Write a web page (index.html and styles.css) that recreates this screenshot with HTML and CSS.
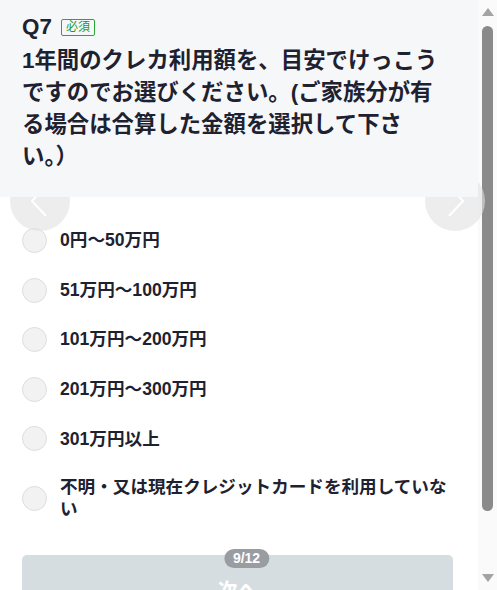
FILE: index.html
```html
<!DOCTYPE html>
<html lang="ja">
<head>
  <meta charset="UTF-8" />
  <title>アンケート Q7</title>
  <link rel="stylesheet" href="styles.css">
</head>
<body>
  <div class="window">
    <div class="page">

      <!-- 設問ヘッダー -->
      <header class="q-head">
        <div class="q-num">Q7 <span class="req">必須</span></div>
        <h1 class="q-text">1年間のクレカ利用額を、目安でけっこうですのでお選びください。(ご家族分が有る場合は合算した金額を選択して下さい。）</h1>
      </header>

      <!-- 選択肢 -->
      <div class="q-body">
        <button class="nav prev" type="button" aria-label="前へ">
          <svg width="16" height="32" viewBox="0 0 16 32"><polyline points="15,1 1,16 15,31" /></svg>
        </button>
        <button class="nav next" type="button" aria-label="次へ">
          <svg width="16" height="32" viewBox="0 0 16 32"><polyline points="1,1 15,16 1,31" /></svg>
        </button>

        <ul class="choices">
          <li class="choice"><span class="radio"></span><span class="label">0円～50万円</span></li>
          <li class="choice"><span class="radio"></span><span class="label">51万円～100万円</span></li>
          <li class="choice"><span class="radio"></span><span class="label">101万円～200万円</span></li>
          <li class="choice"><span class="radio"></span><span class="label">201万円～300万円</span></li>
          <li class="choice"><span class="radio"></span><span class="label">301万円以上</span></li>
          <li class="choice"><span class="radio"></span><span class="label">不明・又は現在クレジットカードを利用していない</span></li>
        </ul>

        <div class="submit-wrap">
          <span class="progress">9/12</span>
          <button class="submit" type="button">次へ</button>
        </div>
      </div>
    </div>

    <!-- スクロールバー -->
    <div class="scrollbar">
      <span class="arrow up"></span>
      <span class="thumb"></span>
      <span class="arrow down"></span>
    </div>
  </div>
</body>
</html>
```

FILE: styles.css
```css
/* リセット用 */
* {
  margin: 0;
  padding: 0;
  box-sizing: border-box;
}

body {
  font-family: "Liberation Sans", "Noto Sans CJK JP", sans-serif;
  background-color: #fff;
  color: #1e2230;
}

.window {
  display: flex;
  height: 590px;
  overflow: hidden;
}

.page {
  width: 478px;
  flex-shrink: 0;
}

/* 設問ヘッダー */
.q-head {
  position: relative;
  z-index: 2;
  background-color: #f6f7f9;
  padding: 12px 38px 24px 22px;
}

.q-num {
  display: flex;
  align-items: center;
  gap: 9px;
  font-size: 22.4px;
  font-weight: bold;
  line-height: 30px;
  margin-bottom: 3px;
}

.req {
  font-size: 12px;
  font-weight: normal;
  line-height: 15px;
  color: #1f9a2a;
  border: 1px solid #2aa836;
  border-radius: 2px;
  padding: 0 4px;
}

.q-text {
  font-size: 22.4px;
  font-weight: bold;
  line-height: 32px;
}

/* 選択肢 */
.q-body {
  position: relative;
  padding: 31px 25px 40px 22px;
}

.nav {
  position: absolute;
  z-index: 1;
  top: -26px;
  width: 60px;
  height: 60px;
  border: none;
  border-radius: 50%;
  background-color: rgba(225, 225, 225, 0.6);
  display: flex;
  align-items: center;
  justify-content: center;
}

.nav svg polyline {
  fill: none;
  stroke: #fff;
  stroke-width: 2;
}

.prev {
  left: 10px;
}

.next {
  left: 425px;
}

.prev svg {
  margin-left: -2px;
}

.next svg {
  margin-left: 2px;
}

.choices {
  list-style: none;
  display: flex;
  flex-direction: column;
  gap: 24.6px;
}

.choice {
  display: flex;
  align-items: center;
  gap: 13px;
  font-size: 17.6px;
  font-weight: bold;
  line-height: 22.5px;
}

.radio {
  width: 25px;
  height: 25px;
  flex-shrink: 0;
  border-radius: 50%;
  background-color: #f2f2f2;
  border: 1px solid #dedede;
}

.submit-wrap {
  position: relative;
  margin-top: 34px;
}

.progress {
  position: absolute;
  top: -6px;
  left: calc(50% + 9px);
  transform: translateX(-50%);
  background-color: #999da2;
  color: #fff;
  font-size: 14px;
  font-weight: bold;
  line-height: 19px;
  padding: 0 9px;
  border-radius: 10px;
}

.submit {
  display: block;
  width: 100%;
  border: none;
  border-radius: 5px;
  background-color: #d6dde1;
  color: #fff;
  font-family: inherit;
  font-size: 20px;
  font-weight: bold;
  line-height: 28px;
  padding: 22px 0 22px;
}

/* スクロールバー */
.scrollbar {
  width: 19px;
  background-color: #fafafa;
  display: flex;
  flex-direction: column;
  align-items: center;
  padding: 8px 0;
}

.arrow {
  width: 0;
  height: 0;
  border-left: 6px solid transparent;
  border-right: 6px solid transparent;
}

.arrow.up {
  border-bottom: 8px solid #a3a3a3;
  margin-bottom: 10px;
}

.arrow.down {
  border-top: 8px solid #a3a3a3;
  margin-top: 63px;
}

.thumb {
  width: 11px;
  height: 485px;
  border-radius: 6px;
  background-color: #8a8a8a;
}
```
